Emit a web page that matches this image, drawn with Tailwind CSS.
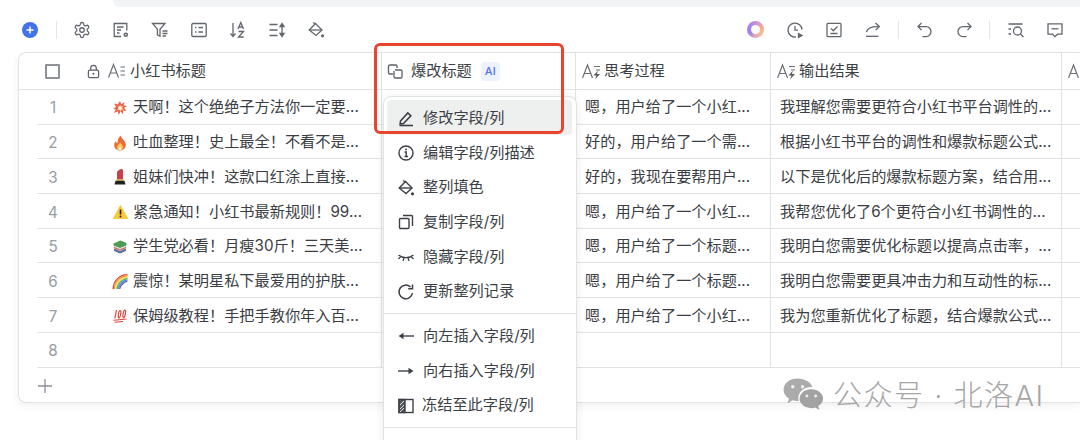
<!DOCTYPE html>
<html lang="zh-CN">
<head>
  <meta charset="UTF-8" />
  <title>爆改标题</title>
  <script src="https://cdn.jsdelivr.net/npm/@tailwindcss/browser@4"></script>
</head>
<body class="relative w-[1080px] h-[440px] overflow-hidden bg-white text-[15.2px] text-[#3a3d43] font-['Inter','Noto_Sans_CJK_SC',sans-serif]">

  <!-- top strip -->
  <div class="ml-[113px] h-[7px] bg-[#f3f4f6] rounded-bl-lg"></div>

  <!-- toolbar -->
  <div class="h-[45px] flex items-center justify-between text-[#62666d]">
    <div class="flex items-center">
      <div class="ml-[22px] w-4 h-4 rounded-full bg-[#4273ea] flex items-center justify-center">
        <svg width="10" height="10" viewBox="0 0 10 10" fill="none" stroke="white" stroke-width="1.5"><path d="M5 1.5v7M1.5 5h7"/></svg>
      </div>
      <div class="ml-[18px] w-px h-[18px] bg-[#e4e5e7]"></div>
      <div class="ml-[5px] flex items-center">
        <div class="w-[39px] flex justify-center">
          <svg width="18" height="18" viewBox="0 0 24 24" fill="none" stroke="currentColor" stroke-width="1.7"><path d="M12.22 2h-.44a2 2 0 0 0-2 2v.18a2 2 0 0 1-1 1.73l-.43.25a2 2 0 0 1-2 0l-.15-.08a2 2 0 0 0-2.73.73l-.22.38a2 2 0 0 0 .73 2.73l.15.1a2 2 0 0 1 1 1.72v.51a2 2 0 0 1-1 1.74l-.15.09a2 2 0 0 0-.73 2.73l.22.38a2 2 0 0 0 2.73.73l.15-.08a2 2 0 0 1 2 0l.43.25a2 2 0 0 1 1 1.73V20a2 2 0 0 0 2 2h.44a2 2 0 0 0 2-2v-.18a2 2 0 0 1 1-1.73l.43-.25a2 2 0 0 1 2 0l.15.08a2 2 0 0 0 2.73-.73l.22-.39a2 2 0 0 0-.73-2.73l-.15-.08a2 2 0 0 1-1-1.74v-.5a2 2 0 0 1 1-1.74l.15-.09a2 2 0 0 0 .73-2.73l-.22-.38a2 2 0 0 0-2.73-.73l-.15.08a2 2 0 0 1-2 0l-.43-.25a2 2 0 0 1-1-1.73V4a2 2 0 0 0-2-2z"/><circle cx="12" cy="12" r="3"/></svg>
        </div>
        <div class="w-[39px] flex justify-center">
          <svg width="18" height="18" viewBox="0 0 18 18" fill="none" stroke="currentColor" stroke-width="1.3"><path d="M9 15.5H2.2V2.500h12.600v7"/><path d="M5 6h6.500M5 9h4M5 12h2.500"/><circle cx="13.800" cy="13.800" r="2.300" fill="currentColor" stroke="none"/><circle cx="13.800" cy="13.800" r=".8" fill="white" stroke="none"/></svg>
        </div>
        <div class="w-[39px] flex justify-center">
          <svg width="18" height="18" viewBox="0 0 18 18" fill="none" stroke="currentColor" stroke-width="1.3"><path d="M1.500 2.500h12.500L9 8.200v7l-2.600-1.400V8.200z"/><path d="M11.500 10h5M11.500 12.500h5M11.500 15h3.500"/></svg>
        </div>
        <div class="w-[39px] flex justify-center">
          <svg width="18" height="18" viewBox="0 0 18 18" fill="none" stroke="currentColor" stroke-width="1.3"><rect x="1.800" y="2.500" width="14.400" height="13" rx="1.200"/><path d="M5 6.500h1.400M8.500 6.500H13M5 11h1.400M8.500 11H13"/></svg>
        </div>
        <div class="w-[39px] flex justify-center">
          <svg width="18" height="18" viewBox="0 0 18 18" fill="none" stroke="currentColor" stroke-width="1.3"><path d="M4 2v13M1.500 12.500 4 15.500l2.500-3"/><path d="M9 8 11.800 1.500 14.500 8M10 6h3.600"/><path d="M9.500 10.500h5l-5 5.500h5.200"/></svg>
        </div>
        <div class="w-[39px] flex justify-center">
          <svg width="18" height="18" viewBox="0 0 18 18" fill="none" stroke="currentColor" stroke-width="1.3"><path d="M1.500 3.500h8M1.500 9h8M1.500 14.500h8"/><path d="M14 3v12"/><path d="M12 5.500 14 2.500l2 3z" fill="currentColor"/><path d="M12 12.500l2 3 2-3z" fill="currentColor"/></svg>
        </div>
        <div class="w-[39px] flex justify-center">
          <svg width="18" height="18" viewBox="0 0 18 18" fill="none" stroke="currentColor" stroke-width="1.3"><path d="M8.500 2.500 15 9l-6 5.500L2.200 9z"/><path d="M2.500 9h12.300"/><path d="M6 1.500l2.500 1.500"/><circle cx="15.500" cy="14.800" r="1.600" fill="currentColor" stroke="none"/></svg>
        </div>
      </div>
    </div>
    <div class="flex items-center">
      <div class="w-[39px] flex justify-center">
        <div class="w-[17px] h-[17px] rounded-full bg-[conic-gradient(#c98de0,#f3a58f,#f6bf8e,#e8a8b8,#9a80f0,#a884f0,#c98de0)] flex items-center justify-center">
          <div class="w-[9px] h-[9px] rounded-full bg-white"></div>
        </div>
      </div>
      <div class="w-[39px] flex justify-center">
        <svg width="18" height="18" viewBox="0 0 18 18" fill="none" stroke="currentColor" stroke-width="1.3"><path d="M10 16A7 7 0 1 1 16 8.600"/><path d="M9 5v4.200h3"/><path d="M12.500 12.500l3.500 2-3.500 2z" fill="currentColor"/></svg>
      </div>
      <div class="w-[39px] flex justify-center">
        <svg width="18" height="18" viewBox="0 0 18 18" fill="none" stroke="currentColor" stroke-width="1.3"><rect x="2" y="2.300" width="14" height="13.400" rx="1"/><path d="M6 7.500l2.300 2.300L12.500 5.500M5.500 12.500h7"/></svg>
      </div>
      <div class="w-[39px] flex justify-center">
        <svg width="18" height="18" viewBox="0 0 18 18" fill="none" stroke="currentColor" stroke-width="1.3"><path d="M2.500 11C3.500 7 7 5.300 14.500 5.600"/><path d="M11.500 2l3.800 3.600-3.600 3.400"/><path d="M2 15.300h12.500"/></svg>
      </div>
      <div class="mx-[6px] w-px h-[18px] bg-[#e4e5e7]"></div>
      <div class="w-[39px] flex justify-center">
        <svg width="18" height="18" viewBox="0 0 18 18" fill="none" stroke="currentColor" stroke-width="1.3"><path d="M5.500 2 2 5.600 5.500 9"/><path d="M2.300 5.600H10a5 5 0 0 1 0 10H6.500"/></svg>
      </div>
      <div class="w-[39px] flex justify-center">
        <svg width="18" height="18" viewBox="0 0 18 18" fill="none" stroke="currentColor" stroke-width="1.3"><path d="M12.500 2 16 5.600 12.500 9"/><path d="M15.700 5.600H8a5 5 0 0 0 0 10h3.500"/></svg>
      </div>
      <div class="mx-[6px] w-px h-[18px] bg-[#e4e5e7]"></div>
      <div class="w-[39px] flex justify-center">
        <svg width="18" height="18" viewBox="0 0 18 18" fill="none" stroke="currentColor" stroke-width="1.3"><path d="M1.500 3h14M1.500 8h2.500M1.500 13h2.500"/><circle cx="10.500" cy="10" r="4"/><path d="M13.500 13l3 3"/></svg>
      </div>
      <div class="w-[39px] flex justify-center mr-[6px]">
        <svg width="18" height="18" viewBox="0 0 18 18" fill="none" stroke="currentColor" stroke-width="1.3"><path d="M2 2.800h14v10.400h-4.500L9 15.700l-2.500-2.500H2z"/><path d="M5.500 7.800h7"/></svg>
      </div>
    </div>
  </div>

  <!-- table card -->
  <div class="ml-[18px] border border-r-0 border-[#e1e2e4] rounded-l-lg shadow-[0_3px_8px_rgba(0,0,0,0.06)]">
    <div class="h-[37px] flex items-center border-b border-[#e1e2e4] text-[#3c3f45]">
      <div class="w-[363px] h-full shrink-0 flex items-center border-r border-[#e1e2e4]">
        <div class="ml-[26px] w-[15px] h-[15px] border-2 border-[#8e9198] rounded-[1px]"></div>
        <svg class="ml-[27px]" width="13" height="15" viewBox="0 0 14 15" fill="none" stroke="#5c6068" stroke-width="1.300"><rect x="1.500" y="6" width="11" height="8" rx="1.400"/><path d="M4 6V3.800a3 3 0 0 1 6 0V6"/><circle cx="7" cy="10" r="1.100" fill="#5c6068" stroke="none"/></svg>
        <svg class="ml-[8px]" width="18" height="16" viewBox="0 0 18 16" fill="none" stroke="#6a6e75" stroke-width="1.200"><path d="M.5 14.500 5.500 1.500l5 13M2.300 10h6.400"/><path d="M12.500 4H17M12.500 8H17M12.500 12H17"/></svg>
        <span class="ml-[4px]">小红书标题</span>
      </div>
      <div class="w-[194px] h-full shrink-0 flex items-center border-r border-[#e1e2e4]">
        <svg class="ml-[5px]" width="17" height="16" viewBox="0 0 17 16" fill="none" stroke="#5c6068" stroke-width="1.300"><path d="M6 11H2.800A1.300 1.300 0 0 1 1.500 9.700V3.300A1.300 1.300 0 0 1 2.800 2h6A1.300 1.300 0 0 1 10 3.300V5"/><path d="M8 7h5.700A1.300 1.300 0 0 1 15 8.300v5.400a1.300 1.300 0 0 1-1.300 1.300H8.300A1.300 1.300 0 0 1 7 13.700V8"/></svg>
        <span class="ml-[7px]">爆改标题</span>
        <span class="ml-[9px] w-[19px] h-[19px] rounded bg-[#eef2fe] text-[#4d6ff0] text-[11px] font-medium flex items-center justify-center">AI</span>
      </div>
      <div class="w-[195px] h-full shrink-0 flex items-center border-r border-[#e1e2e4]">
        <svg class="ml-[6px]" width="19" height="17" viewBox="0 0 19 17" fill="none" stroke="#6a6e75" stroke-width="1.200"><path d="M.5 15 5.500 2l5 13M2.300 10.500h6.400M12 3.500h6M14 7h4"/><path d="M16 7.500l-4.500 5h3L13 16.500l5-5.500h-3.200l1.200-3.500z" fill="#55585e" stroke="none"/></svg>
        <span class="ml-[3px]">思考过程</span>
      </div>
      <div class="w-[291px] h-full shrink-0 flex items-center border-r border-[#e1e2e4]">
        <svg class="ml-[6px]" width="19" height="17" viewBox="0 0 19 17" fill="none" stroke="#6a6e75" stroke-width="1.200"><path d="M.5 15 5.500 2l5 13M2.300 10.500h6.400M12 3.500h6M14 7h4"/><path d="M16 7.500l-4.500 5h3L13 16.500l5-5.500h-3.200l1.200-3.500z" fill="#55585e" stroke="none"/></svg>
        <span class="ml-[3px]">输出结果</span>
      </div>
      <svg class="ml-[6px] shrink-0" width="19" height="17" viewBox="0 0 19 17" fill="none" stroke="#6a6e75" stroke-width="1.200"><path d="M.5 15 5.500 2l5 13M2.300 10.500h6.400M12 3.500h6"/></svg>
    </div>

    <!-- rows -->
    <div class="ml-[18px] flex h-[34.7px] items-center border-b border-[#e1e2e4]">
      <div class="w-[345px] h-full shrink-0 flex items-center pt-[2px] border-r border-[#e1e2e4]">
        <span class="w-[32px] mt-[2px] text-center text-[#989ca3]">1</span>
        <svg class="ml-[44px] shrink-0" width="14" height="14" viewBox="0 0 14 14"><path d="M7 0l1.300 3.300L11.500 1 10.600 4.600 14 5l-2.800 2.100L13.500 10l-3.500-.6L10 13 7.600 10.500 5.500 14l-.6-3.700L1 12l1.700-3.400L0 7.300l3.200-1L1 2.500l3.700 1.100z" fill="#e8604a"/><path d="M7 3.500l.9 2 2.200-.5-1 2 1.600 1.600-2.200.1L7.500 11 6.300 8.800 4 8.900l1.500-1.700L4.400 5.200l2 .4z" fill="#fbd9a0"/><circle cx="7" cy="7" r="1.500" fill="#fff6e6"/></svg>
        <span class="ml-[6px]">天啊！这个绝绝子方法你一定要...</span>
      </div>
      <div class="w-[194px] h-full shrink-0 border-r border-[#e1e2e4]"></div>
      <div class="w-[195px] h-full shrink-0 flex items-center pt-[2px] border-r border-[#e1e2e4]"><span class="ml-[9px]">嗯，用户给了一个小红...</span></div>
      <div class="w-[291px] h-full shrink-0 flex items-center pt-[2px] border-r border-[#e1e2e4]"><span class="ml-[9px]">我理解您需要更符合小红书平台调性的...</span></div>
    </div>
    <div class="ml-[18px] flex h-[34.7px] items-center border-b border-[#e1e2e4]">
      <div class="w-[345px] h-full shrink-0 flex items-center pt-[2px] border-r border-[#e1e2e4]">
        <span class="w-[32px] mt-[2px] text-center text-[#989ca3]">2</span>
        <svg class="ml-[44px] shrink-0" width="14" height="16" viewBox="0 0 14 15"><path d="M7.500 0c.6 3 4.800 4.800 5.300 9 .3 3.300-2.600 6-5.800 6S1 12.500 1.200 9.500C1.300 7.600 2.300 6.300 3 5.500c.1 1.200.6 2 1.500 2.300C4.300 5 5.500 2 7.500 0z" fill="#ee6a35"/><path d="M7.200 6.500c.3 1.800 2.800 2.800 2.800 5.200 0 1.800-1.400 3.300-3 3.300s-3-1.400-3-3.100C4 10 6.400 8.800 7.200 6.500z" fill="#fbc760"/><path d="M7 10.500c.2.900 1.300 1.400 1.300 2.700 0 .9-.6 1.800-1.300 1.800s-1.400-.8-1.400-1.700C5.600 12.200 6.700 11.600 7 10.500z" fill="#fff0cf"/></svg>
        <span class="ml-[6px]">吐血整理！史上最全！不看不是...</span>
      </div>
      <div class="w-[194px] h-full shrink-0 border-r border-[#e1e2e4]"></div>
      <div class="w-[195px] h-full shrink-0 flex items-center pt-[2px] border-r border-[#e1e2e4]"><span class="ml-[9px]">好的，用户给了一个需...</span></div>
      <div class="w-[291px] h-full shrink-0 flex items-center pt-[2px] border-r border-[#e1e2e4]"><span class="ml-[9px]">根据小红书平台的调性和爆款标题公式...</span></div>
    </div>
    <div class="ml-[18px] flex h-[34.7px] items-center border-b border-[#e1e2e4]">
      <div class="w-[345px] h-full shrink-0 flex items-center pt-[2px] border-r border-[#e1e2e4]">
        <span class="w-[32px] mt-[2px] text-center text-[#989ca3]">3</span>
        <svg class="ml-[44px] shrink-0" width="14" height="16" viewBox="0 0 14 16"><path d="M4 10V3.500C4 2 6.500.3 8.500 0 9.600 0 10 .6 10 1.500V10z" fill="#c9404a"/><rect x="3.500" y="10" width="7" height="1.800" fill="#d8b25a"/><path d="M2.500 11.800h9l1 3.700H1.500z" fill="#232326"/></svg>
        <span class="ml-[6px]">姐妹们快冲！这款口红涂上直接...</span>
      </div>
      <div class="w-[194px] h-full shrink-0 border-r border-[#e1e2e4]"></div>
      <div class="w-[195px] h-full shrink-0 flex items-center pt-[2px] border-r border-[#e1e2e4]"><span class="ml-[9px]">好的，我现在要帮用户...</span></div>
      <div class="w-[291px] h-full shrink-0 flex items-center pt-[2px] border-r border-[#e1e2e4]"><span class="ml-[9px]">以下是优化后的爆款标题方案，结合用...</span></div>
    </div>
    <div class="ml-[18px] flex h-[34.7px] items-center border-b border-[#e1e2e4]">
      <div class="w-[345px] h-full shrink-0 flex items-center pt-[2px] border-r border-[#e1e2e4]">
        <span class="w-[32px] mt-[2px] text-center text-[#989ca3]">4</span>
        <svg class="ml-[44px] shrink-0" width="15" height="14" viewBox="0 0 15 14"><path d="M7.500.5 14.700 13.500H.3z" fill="#f7c93e" stroke="#f7c93e" stroke-linejoin="round"/><path d="M7.500 4.500v5" stroke="#222" stroke-width="1.600"/><circle cx="7.500" cy="11.500" r="1" fill="#222"/></svg>
        <span class="ml-[5px]">紧急通知！小红书最新规则！99...</span>
      </div>
      <div class="w-[194px] h-full shrink-0 border-r border-[#e1e2e4]"></div>
      <div class="w-[195px] h-full shrink-0 flex items-center pt-[2px] border-r border-[#e1e2e4]"><span class="ml-[9px]">嗯，用户给了一个小红...</span></div>
      <div class="w-[291px] h-full shrink-0 flex items-center pt-[2px] border-r border-[#e1e2e4]"><span class="ml-[9px]">我帮您优化了6个更符合小红书调性的...</span></div>
    </div>
    <div class="ml-[18px] flex h-[34.7px] items-center border-b border-[#e1e2e4]">
      <div class="w-[345px] h-full shrink-0 flex items-center pt-[2px] border-r border-[#e1e2e4]">
        <span class="w-[32px] mt-[2px] text-center text-[#989ca3]">5</span>
        <svg class="ml-[44px] shrink-0" width="14" height="14" viewBox="0 0 14 14"><path d="M.5 3.500 7.500.5 13.500 3v2.500L7 8 .5 5.500z" fill="#4f9a55"/><path d="M1 6l6 2.500 6-2.500v2.500L7 11 1 8.500z" fill="#d8d5c8"/><path d="M1 8.500 7 11l6-2.500V11L7 13.500 1 11z" fill="#5b6f9e"/><path d="M1 7.500l6 2.500 6-2.500" fill="none" stroke="#c9483f" stroke-width=".9"/></svg>
        <span class="ml-[6px]">学生党必看！月瘦30斤！三天美...</span>
      </div>
      <div class="w-[194px] h-full shrink-0 border-r border-[#e1e2e4]"></div>
      <div class="w-[195px] h-full shrink-0 flex items-center pt-[2px] border-r border-[#e1e2e4]"><span class="ml-[9px]">嗯，用户给了一个标题...</span></div>
      <div class="w-[291px] h-full shrink-0 flex items-center pt-[2px] border-r border-[#e1e2e4]"><span class="ml-[9px]">我明白您需要优化标题以提高点击率，...</span></div>
    </div>
    <div class="ml-[18px] flex h-[34.7px] items-center border-b border-[#e1e2e4]">
      <div class="w-[345px] h-full shrink-0 flex items-center pt-[2px] border-r border-[#e1e2e4]">
        <span class="w-[32px] mt-[2px] text-center text-[#989ca3]">6</span>
        <svg class="ml-[43px] shrink-0" width="16" height="15" viewBox="0 0 15 15" fill="none" stroke-width="1.300"><path d="M.7 15C.7 7 7 .7 15 .7" stroke="#e3413c"/><path d="M2 15C2 8 8 2 15 2" stroke="#f39b2f"/><path d="M3.300 15C3.300 9 9 3.300 15 3.300" stroke="#f6dc45"/><path d="M4.600 15C4.600 10 10 4.600 15 4.600" stroke="#5bb553"/><path d="M5.900 15C5.900 11 11 5.900 15 5.900" stroke="#3f8fe0"/><path d="M7.200 15C7.200 12 12 7.200 15 7.200" stroke="#7a4fc4"/></svg>
        <span class="ml-[5px]">震惊！某明星私下最爱用的护肤...</span>
      </div>
      <div class="w-[194px] h-full shrink-0 border-r border-[#e1e2e4]"></div>
      <div class="w-[195px] h-full shrink-0 flex items-center pt-[2px] border-r border-[#e1e2e4]"><span class="ml-[9px]">嗯，用户给了一个标题...</span></div>
      <div class="w-[291px] h-full shrink-0 flex items-center pt-[2px] border-r border-[#e1e2e4]"><span class="ml-[9px]">我明白您需要更具冲击力和互动性的标...</span></div>
    </div>
    <div class="ml-[18px] flex h-[34.7px] items-center border-b border-[#e1e2e4]">
      <div class="w-[345px] h-full shrink-0 flex items-center pt-[2px] border-r border-[#e1e2e4]">
        <span class="w-[32px] mt-[2px] text-center text-[#989ca3]">7</span>
        <svg class="ml-[44px] shrink-0" width="14" height="14" viewBox="0 0 14 14" fill="none" stroke="#d9423a"><path d="M3.500 1 1.800 9.500M7.300 1.500C5.500 1.500 4.500 9 5.900 9S8.800 1.500 7.300 1.500zM12 1C10.200 1 9.200 8.700 10.600 8.700S13.500 1 12 1z" stroke-width="1.200"/><path d="M.5 11.300 13.500 10M1.500 13.300 10 12.500" stroke-width="1"/></svg>
        <span class="ml-[6px]">保姆级教程！手把手教你年入百...</span>
      </div>
      <div class="w-[194px] h-full shrink-0 border-r border-[#e1e2e4]"></div>
      <div class="w-[195px] h-full shrink-0 flex items-center pt-[2px] border-r border-[#e1e2e4]"><span class="ml-[9px]">嗯，用户给了一个小红...</span></div>
      <div class="w-[291px] h-full shrink-0 flex items-center pt-[2px] border-r border-[#e1e2e4]"><span class="ml-[9px]">我为您重新优化了标题，结合爆款公式...</span></div>
    </div>
    <div class="ml-[18px] flex h-[34.7px] items-center border-b border-[#e1e2e4]">
      <div class="w-[345px] h-full shrink-0 flex items-center pt-[2px] border-r border-[#e1e2e4]">
        <span class="w-[32px] mt-[2px] text-center text-[#989ca3]">8</span>
      </div>
      <div class="w-[194px] h-full shrink-0 border-r border-[#e1e2e4]"></div>
      <div class="w-[195px] h-full shrink-0 border-r border-[#e1e2e4]"></div>
      <div class="w-[291px] h-full shrink-0 border-r border-[#e1e2e4]"></div>
    </div>
    <div class="h-[34px] flex items-center pl-[18px] pt-[2px]">
      <svg width="16" height="16" viewBox="0 0 16 16" fill="none" stroke="#8d9096" stroke-width="1.300"><path d="M8 1v14M1 8h14"/></svg>
    </div>
  </div>

  <!-- column menu -->
  <div class="absolute left-[383px] top-[96px] w-[194px] h-[360px] bg-white border border-[#e1e2e4] rounded-t-lg shadow-[0_2px_10px_rgba(0,0,0,0.08)] pt-[3px] text-[#3c3f45]">
    <div class="ml-[3px] mr-[4px] h-[34.7px] pt-[2px] flex items-center rounded bg-[#eef0ef]">
      <svg class="ml-[10px]" width="18" height="18" viewBox="0 0 18 18" fill="none" stroke="#3c3f45" stroke-width="1.600"><path d="M3.500 12 10.800 4l3 2.700-7.300 7.800-3.300.5z"/><path d="M2.500 16.500h13.500"/></svg>
      <span class="ml-[8px]">修改字段/列</span>
    </div>
    <div class="ml-[3px] mr-[4px] h-[34.7px] pt-[2px] flex items-center">
      <svg class="ml-[10px]" width="18" height="18" viewBox="0 0 18 18" fill="none" stroke="#3c3f45" stroke-width="1.400"><circle cx="9" cy="9" r="7"/><path d="M7.500 8H9.200v4.500M7.500 12.500h3.500"/><circle cx="9" cy="5.500" r=".9" fill="#3c3f45" stroke="none"/></svg>
      <span class="ml-[8px]">编辑字段/列描述</span>
    </div>
    <div class="ml-[3px] mr-[4px] h-[34.7px] pt-[2px] flex items-center">
      <svg class="ml-[10px]" width="18" height="18" viewBox="0 0 18 18" fill="none" stroke="#3c3f45" stroke-width="1.400"><path d="M8.500 2.500 15 9l-6 5.500L2.200 9z"/><path d="M2.500 9h12.300"/><path d="M6 1.500l2.500 1.500"/><circle cx="15.500" cy="14.800" r="1.600" fill="#3c3f45" stroke="none"/></svg>
      <span class="ml-[8px]">整列填色</span>
    </div>
    <div class="ml-[3px] mr-[4px] h-[34.7px] pt-[2px] flex items-center">
      <svg class="ml-[10px]" width="18" height="18" viewBox="0 0 18 18" fill="none" stroke="#3c3f45" stroke-width="1.400"><rect x="2.500" y="5.500" width="9.500" height="10" rx="1"/><path d="M6 2.500h8.500a1 1 0 0 1 1 1V13"/></svg>
      <span class="ml-[8px]">复制字段/列</span>
    </div>
    <div class="ml-[3px] mr-[4px] h-[34.7px] pt-[2px] flex items-center">
      <svg class="ml-[10px]" width="18" height="18" viewBox="0 0 18 18" fill="none" stroke="#3c3f45" stroke-width="1.200"><path d="M1.500 7c4 3.500 11 3.500 15 0"/><path d="M1.500 11l2.300-2.400M6 13l1-3.200M12 13l-1-3.200M16.500 11l-2.300-2.400"/></svg>
      <span class="ml-[8px]">隐藏字段/列</span>
    </div>
    <div class="ml-[3px] mr-[4px] h-[34.7px] pt-[2px] flex items-center">
      <svg class="ml-[10px]" width="18" height="18" viewBox="0 0 18 18" fill="none" stroke="#3c3f45" stroke-width="1.500"><path d="M15.500 10a6.800 6.800 0 1 1-2-6"/><path d="M15.500 1.500v4.200h-4.300"/></svg>
      <span class="ml-[8px]">更新整列记录</span>
    </div>
    <div class="my-[4.500px] h-px bg-[#e1e2e4]"></div>
    <div class="ml-[3px] mr-[4px] h-[34.7px] pt-[2px] flex items-center">
      <svg class="ml-[10px]" width="18" height="18" viewBox="0 0 18 18" fill="none" stroke="#3c3f45" stroke-width="1.400"><path d="M3 9h14"/><path d="M1.500 9 6.500 5.800v6.400z" fill="#3c3f45" stroke="none"/></svg>
      <span class="ml-[8px]">向左插入字段/列</span>
    </div>
    <div class="ml-[3px] mr-[4px] h-[34.7px] pt-[2px] flex items-center">
      <svg class="ml-[10px]" width="18" height="18" viewBox="0 0 18 18" fill="none" stroke="#3c3f45" stroke-width="1.400"><path d="M1 9h14"/><path d="M16.500 9 11.500 5.800v6.400z" fill="#3c3f45" stroke="none"/></svg>
      <span class="ml-[8px]">向右插入字段/列</span>
    </div>
    <div class="ml-[3px] mr-[4px] h-[34.7px] pt-[2px] flex items-center">
      <svg class="ml-[10px]" width="18" height="18" viewBox="0 0 18 18" fill="none" stroke="#3c3f45" stroke-width="1.400"><rect x="2" y="2.500" width="14" height="13"/><rect x="2" y="2.500" width="6" height="13" fill="#55585e"/><path d="M3 8l4-4M3 12l4-4M3 15l4-4" stroke="white" stroke-width=".8"/></svg>
      <span class="ml-[7px]">冻结至此字段/列</span>
    </div>
    <div class="mt-[4.500px] h-px bg-[#e1e2e4]"></div>
  </div>

  <!-- red highlight -->
  <div class="absolute left-[374px] top-[43px] w-[190px] h-[91px] border-[3px] border-[#e8452f] rounded-md"></div>

  <!-- watermark -->
  <div class="absolute left-[783px] top-[378px] flex items-center text-[#a6a6a6]">
    <svg width="41" height="35" viewBox="0 0 42 36"><path d="M15 .5C7 .5.500 5.500.500 12c0 3.800 2.200 7 5.600 9.200L4.500 26l5.500-3c1.500.4 3.300.7 5 .7h1.200a11 11 0 0 1-.5-3.200c0-6.300 6-11.300 13.400-11.300h1C28.500 4.200 22.300.500 15 .500z" fill="#ababab"/><path d="M29 11.500c-6.700 0-12 4.300-12 9.700S22.300 31 29 31c1.300 0 2.700-.2 4-.6l4.500 2.600-1.300-4.200c3-1.800 5-4.500 5-7.600 0-5.400-5.500-9.700-12.200-9.700z" fill="#a2a2a2"/><circle cx="10" cy="9" r="1.800" fill="#eee"/><circle cx="20" cy="9" r="1.800" fill="#eee"/><circle cx="24.500" cy="18.500" r="1.500" fill="#eee"/><circle cx="33.500" cy="18.500" r="1.500" fill="#eee"/></svg>
    <span class="ml-[9px] text-[29px] leading-none tracking-[1.5px] font-light whitespace-nowrap">公众号 · 北洛AI</span>
  </div>
</body>
</html>
